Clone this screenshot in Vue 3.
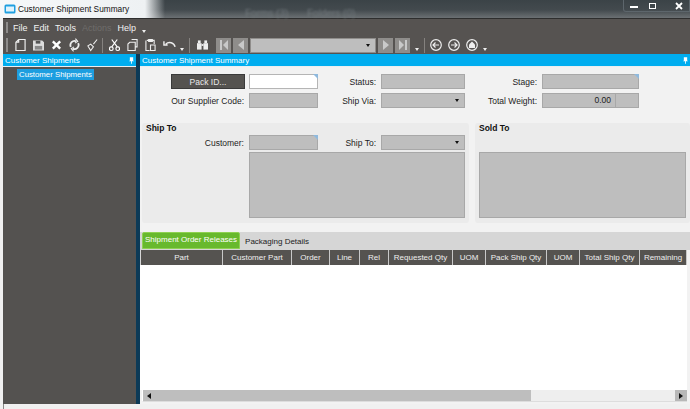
<template>
  <div class="window">
    <!-- Title bar -->
    <div class="titlebar">
      <svg class="app-icon" viewBox="0 0 12 10">
        <rect x="0.5" y="0.5" width="11" height="9" rx="1.5" fill="#1f9fe0" />
        <rect x="2" y="2.5" width="8" height="5" fill="#dff3fc" />
      </svg>
      <span class="title-text">Customer Shipment Summary</span>
      <span class="blur-text">Forms (3)</span>
      <span class="blur-text second">Folders (0)</span>
      <div class="win-buttons">
        <span class="win-btn"><i class="min"></i></span>
        <span class="win-btn"><i class="max"></i></span>
        <span class="win-btn close">
          <svg viewBox="0 0 8 8" width="8" height="8"><path d="M1 1l6 6M7 1L1 7" stroke="#fff" stroke-width="1.8" /></svg>
        </span>
      </div>
    </div>

    <div class="frame">
      <!-- Menu -->
      <div class="menubar">
        <span class="grip"></span>
        <span class="menu-item">File</span>
        <span class="menu-item">Edit</span>
        <span class="menu-item">Tools</span>
        <span class="menu-item disabled">Actions</span>
        <span class="menu-item">Help</span>
        <span class="drop-mark"></span>
      </div>

      <!-- Toolbar -->
      <div class="toolbar">
        <span class="grip tall"></span>
        <svg class="tool" viewBox="0 0 12 14" fill="none" stroke="#eee" stroke-width="1.3"><path d="M4 1h7v12H1V4zM4 1v3H1" /></svg>
        <svg class="tool" viewBox="0 0 12 14"><path d="M0 2h10l2 2v9H0z" fill="#ddd" /><rect x="3" y="2.5" width="5" height="3" fill="#555" /><rect x="2" y="8" width="8" height="4" fill="#888" /></svg>
        <svg class="tool" viewBox="0 0 12 14"><path d="M2 3l8 8M10 3l-8 8" stroke="#fff" stroke-width="2.6" /></svg>
        <svg class="tool" viewBox="0 0 12 14" fill="none" stroke="#eee" stroke-width="2"><path d="M2 9a4.500 4.500 0 0 1 6-6M10 5a4.500 4.500 0 0 1-6 6" /><path d="M7 0l2.500 3-3 2M5 14l-2.500-3 3-2" stroke-width="1.2" /></svg>
        <svg class="tool" viewBox="0 0 12 14" fill="none" stroke="#eee" stroke-width="1.2"><path d="M11 1L7 6M4 6l3 3-3 4-3-5z" /></svg>
        <span class="sep"></span>
        <svg class="tool" viewBox="0 0 12 14" fill="none" stroke="#fff" stroke-width="1.3"><path d="M3 1l6 8M9 1L3 9" /><circle cx="2.500" cy="11" r="2" /><circle cx="9.500" cy="11" r="2" /></svg>
        <svg class="tool" viewBox="0 0 12 14" fill="none" stroke="#eee" stroke-width="1.2"><path d="M5 1h6v8H9M3 4h6v9H1V6z" /></svg>
        <svg class="tool" viewBox="0 0 12 14" fill="none" stroke="#eee" stroke-width="1.2"><path d="M2 2h8v4M5 13H1V2M4 1h4v2H4zM6 7h5v6H6z" /></svg>
        <svg class="tool wide" viewBox="0 0 14 14" fill="none" stroke="#eee" stroke-width="1.5"><path d="M3 6a6 6 0 0 1 10 3M1 3v4h4" /></svg>
        <span class="drop-mark small"></span>
        <span class="sep narrow"></span>
        <svg class="tool binoc" viewBox="0 0 12 14" fill="#eee"><rect x="0" y="5" width="5" height="7" /><rect x="7" y="5" width="5" height="7" /><rect x="1" y="2" width="3" height="3" /><rect x="8" y="2" width="3" height="3" /><rect x="5" y="6" width="2" height="2" /></svg>
        <span class="nav-btn first">
          <svg viewBox="0 0 10 12" width="10" height="12" fill="#c9c9c9"><rect x="1" y="1" width="2" height="10" /><path d="M9 1v10L4 6z" /></svg>
        </span>
        <span class="nav-btn">
          <svg viewBox="0 0 10 12" width="10" height="12" fill="#c9c9c9"><path d="M8 1v10L2 6z" /></svg>
        </span>
        <span class="nav-combo"><span class="arrow"></span></span>
        <span class="nav-btn">
          <svg viewBox="0 0 10 12" width="10" height="12" fill="#c9c9c9"><path d="M2 1v10l6-5z" /></svg>
        </span>
        <span class="nav-btn">
          <svg viewBox="0 0 10 12" width="10" height="12" fill="#c9c9c9"><path d="M1 1v10l5-5z" /><rect x="7" y="1" width="2" height="10" /></svg>
        </span>
        <span class="drop-mark after-nav"></span>
        <span class="sep narrow"></span>
        <svg class="round first-round" viewBox="0 0 12 12" fill="none" stroke="#eee" stroke-width="1.2"><circle cx="6" cy="6" r="5.300" /><path d="M9 6H3.500M5.500 3.500L3 6l2.500 2.500" /></svg>
        <svg class="round" viewBox="0 0 12 12" fill="none" stroke="#eee" stroke-width="1.2"><circle cx="6" cy="6" r="5.300" /><path d="M3 6h5.500M6.500 3.500L9 6 6.500 8.500" /></svg>
        <svg class="round" viewBox="0 0 12 12"><circle cx="6" cy="6" r="5.300" fill="none" stroke="#eee" stroke-width="1.2" /><path d="M6 2.500L9 5.500V9H3V5.500z" fill="#eee" /></svg>
        <span class="drop-mark after-round"></span>
      </div>

      <div class="panes">
        <!-- Left tree -->
        <aside class="side">
          <div class="pane-head">
            <span>Customer Shipments</span>
            <svg class="pin" viewBox="0 0 6 8"><path d="M1 0h4v4l1 1H0l1-1zM2.500 5h1v3h-1z" fill="#fff" /></svg>
          </div>
          <div class="side-body">
            <span class="tree-node">Customer Shipments</span>
          </div>
        </aside>
        <div class="splitter"></div>

        <!-- Main -->
        <main class="main">
          <div class="pane-head">
            <span>Customer Shipment Summary</span>
            <svg class="pin" viewBox="0 0 6 8"><path d="M1 0h4v4l1 1H0l1-1zM2.500 5h1v3h-1z" fill="#fff" /></svg>
          </div>

          <div class="top-form">
            <button class="pack-btn">Pack ID...</button>
            <span class="field white flag"></span>
            <label>Status:</label>
            <span class="field"></span>
            <label>Stage:</label>
            <span class="field flag"></span>

            <label>Our Supplier Code:</label>
            <span class="field"></span>
            <label>Ship Via:</label>
            <span class="field select"><span class="arrow"></span></span>
            <label>Total Weight:</label>
            <span class="field weight"><span class="weight-val">0.00</span><span class="weight-unit"></span></span>
          </div>

          <div class="groups">
            <section class="group ship">
              <h4>Ship To</h4>
              <div class="ship-grid">
                <label>Customer:</label>
                <span class="field flag"></span>
                <label>Ship To:</label>
                <span class="field select"><span class="arrow"></span></span>
                <span class="field memo"></span>
              </div>
            </section>
            <section class="group sold">
              <h4>Sold To</h4>
              <span class="field memo"></span>
            </section>
          </div>

          <div class="tabs">
            <span class="tab active">Shipment Order Releases</span>
            <span class="tab">Packaging Details</span>
          </div>

          <div class="grid-head">
            <span
              v-for="col in columns"
              :key="col.name + col.width"
              class="col"
              :style="{ width: col.width + 'px' }"
            >{{ col.name }}</span>
          </div>
          <div class="grid-body"></div>

          <div class="hscroll">
            <span class="sb-btn left"><span class="tri-left"></span></span>
            <span class="sb-thumb"></span>
            <span class="sb-track"></span>
            <span class="sb-btn right"><span class="tri-right"></span></span>
          </div>
        </main>
      </div>
    </div>
    <div class="statusbar"></div>
  </div>
</template>

<script setup>
const columns = [
  { name: 'Part', width: 82 },
  { name: 'Customer Part', width: 69 },
  { name: 'Order', width: 38 },
  { name: 'Line', width: 30 },
  { name: 'Rel', width: 29 },
  { name: 'Requested Qty', width: 64 },
  { name: 'UOM', width: 33 },
  { name: 'Pack Ship Qty', width: 61 },
  { name: 'UOM', width: 33 },
  { name: 'Total Ship Qty', width: 60 },
  { name: 'Remaining', width: 47 }
]
</script>

<style>
html, body {
  margin: 0;
  background: #f0f0f0;
}
</style>

<style scoped>
.window {
  width: 690px;
  height: 409px;
  overflow: hidden;
  display: flex;
  flex-direction: column;
  font-family: "Liberation Sans", Arial, sans-serif;
  font-size: 8.5px;
  color: #1c1c1c;
  background: #f0f0f0;
}

/* Title bar */
.titlebar {
  height: 18px;
  flex-shrink: 0;
  display: flex;
  align-items: center;
  position: relative;
  background:
    linear-gradient(90deg, #f6f8f9 0, #eef1f3 145px, rgba(238, 241, 243, 0) 165px),
    linear-gradient(180deg, #3b4347 0, #434a4e 10px, #6b7073 100%);
}
.app-icon {
  width: 12px;
  height: 10px;
  margin-left: 4px;
}
.title-text {
  margin-left: 2px;
  font-size: 8.3px;
  color: #111;
}
.blur-text {
  position: absolute;
  left: 245px;
  top: 8px;
  font-size: 10px;
  color: #70777b;
  filter: blur(1px);
}
.blur-text.second {
  left: 307px;
}
.win-buttons {
  position: absolute;
  right: 0;
  top: 0;
  height: 12px;
  width: 67px;
  display: flex;
  border: 1px solid #5d666c;
  border-top: 0;
  border-radius: 0 0 0 3px;
  box-sizing: border-box;
}
.win-btn {
  width: 19px;
  display: flex;
  align-items: center;
  justify-content: center;
}
.win-btn.close {
  flex: 1;
  padding-left: 6px;
}
.min {
  width: 8px;
  height: 2px;
  background: #fff;
  margin-top: 3px;
}
.max {
  width: 5px;
  height: 4px;
  border: 1.5px solid #fff;
}

/* Frame */
.frame {
  flex: 1;
  min-height: 0;
  margin-left: 3px;
  display: flex;
  flex-direction: column;
  background: #565351;
  border-top: 1px solid #2e2e2e;
}
.menubar {
  height: 17px;
  display: flex;
  align-items: center;
  color: #f2f2f2;
  font-size: 9px;
}
.menubar .grip {
  height: 11px;
  margin: 0 5px 0 3px;
}
.grip {
  width: 2px;
  background: #8d8b8a;
}
.grip.tall {
  height: 14px;
  margin: 0 0 0 3px;
}
.menu-item {
  margin-right: 6px;
}
.menu-item.disabled {
  color: #6f6d6b;
}
.drop-mark {
  width: 0;
  height: 0;
  border: 2px solid transparent;
  border-top: 3px solid #eee;
  border-bottom: 0;
  align-self: flex-end;
  margin-bottom: 3px;
}
.drop-mark.small {
  margin-left: 4px;
}
.drop-mark.after-nav {
  margin-left: 5px;
}
.drop-mark.after-round {
  margin-left: 5px;
}

.toolbar {
  height: 18px;
  display: flex;
  align-items: center;
}
.tool {
  width: 11px;
  height: 14px;
  margin-left: 7px;
  flex-shrink: 0;
}
.tool.wide {
  width: 13px;
}
.sep {
  width: 1px;
  height: 15px;
  background: #85827f;
  margin-left: 4px;
  margin-right: -1px;
}
.sep.narrow {
  margin-left: 5px;
  margin-right: 0;
}
.nav-btn {
  width: 15px;
  height: 15px;
  margin-left: 2px;
  background: #8f8d8b;
  display: flex;
  align-items: center;
  justify-content: center;
  flex-shrink: 0;
}
.nav-btn.first {
  margin-left: 8px;
}
.nav-combo {
  width: 126px;
  height: 15px;
  margin-left: 2px;
  background: #bebebe;
  border: 1px solid #8f8d8b;
  box-sizing: border-box;
  position: relative;
}
.round {
  width: 12px;
  height: 12px;
  margin-left: 6px;
  flex-shrink: 0;
}
.round.first-round {
  margin-left: 5px;
}
.arrow {
  position: absolute;
  right: 5px;
  top: 5px;
  width: 0;
  height: 0;
  border: 2.5px solid transparent;
  border-top: 3px solid #111;
  border-bottom: 0;
}

/* Panes */
.panes {
  flex: 1;
  min-height: 0;
  display: flex;
}
.side {
  width: 133px;
  flex-shrink: 0;
  display: flex;
  flex-direction: column;
}
.splitter {
  width: 4px;
  flex-shrink: 0;
  background: #0c3a57;
}
.pane-head {
  height: 12px;
  flex-shrink: 0;
  display: flex;
  align-items: center;
  justify-content: space-between;
  padding: 0 2px;
  background: #00adef;
  color: #fff;
  border-bottom: 1px solid #e9eef1;
  font-size: 8px;
}
.pin {
  width: 5px;
  height: 7px;
}
.side-body {
  flex: 1;
  padding-top: 2px;
  padding-left: 14px;
  background: #545250;
}
.tree-node {
  display: inline-block;
  background: #1d9ee0;
  color: #fff;
  padding: 0 2px;
  line-height: 11px;
  font-size: 7.8px;
}

.main {
  flex: 1;
  min-width: 0;
  display: flex;
  flex-direction: column;
  background: #f2f2f2;
}

/* Form */
.top-form {
  display: grid;
  grid-template-columns: 109px 69px 63px 84px 77px 97px;
  grid-auto-rows: 15px;
  row-gap: 4px;
  padding-top: 7px;
  padding-bottom: 8px;
  height: 41px;
  align-items: center;
  flex-shrink: 0;
}
label {
  text-align: right;
  padding-right: 5px;
  white-space: nowrap;
}
.pack-btn {
  justify-self: end;
  width: 74px;
  height: 15px;
  margin-right: 4px;
  padding: 0;
  border: 1px solid #3a3a3a;
  background: #555350;
  color: #e8e8e8;
  font: inherit;
}
.field {
  display: block;
  position: relative;
  height: 15px;
  background: #bebebe;
  border: 1px solid #a8a8a8;
  box-sizing: border-box;
}
.field.white {
  background: #fff;
  border-color: #b5b5b5;
}
.flag::after {
  content: "";
  position: absolute;
  top: -1px;
  right: -1px;
  border-top: 5px solid #8fb9dd;
  border-left: 5px solid transparent;
}
.weight {
  display: flex;
}
.weight-val {
  flex: 1;
  text-align: right;
  padding-right: 4px;
  line-height: 13px;
  border-right: 1px solid #a8a8a8;
}
.weight-unit {
  width: 22px;
}

/* Groups */
.groups {
  display: flex;
  height: 100px;
  padding-left: 2px;
  gap: 6px;
  flex-shrink: 0;
}
.group {
  background: #ebebeb;
  border-radius: 3px;
  padding: 0 4px;
}
.group h4 {
  margin: 0;
  font-size: 8.5px;
  line-height: 11px;
  color: #111;
  font-weight: bold;
}
.ship {
  width: 328px;
  box-sizing: border-box;
}
.sold {
  flex: 1;
}
.ship-grid {
  display: grid;
  grid-template-columns: 107px 69px 63px 84px;
  grid-template-rows: 15px 66px;
  row-gap: 2px;
  margin-left: -4px;
  margin-top: 1px;
  align-items: center;
}
.memo {
  height: 66px;
  grid-column: 2 / 5;
}
.sold .memo {
  margin-top: 18px;
  width: 207px;
}

/* Tabs */
.tabs {
  margin-top: 9px;
  height: 17px;
  padding: 0 0 1px 2px;
  flex-shrink: 0;
  display: flex;
  align-items: flex-end;
  background: #d6d6d6;
  font-size: 8px;
}
.tab {
  line-height: 15px;
  padding: 0 8px 0 5px;
  color: #222;
}
.tab.active {
  background: #68b92d;
  border: 1px solid #8fd152;
  border-radius: 2px 2px 0 0;
  color: #fff;
  padding: 0 2px 1px;
  line-height: 14px;
}

/* Grid */
.grid-head {
  display: flex;
  height: 15px;
  flex-shrink: 0;
  padding-left: 1px;
  margin-right: 3px;
  overflow: hidden;
  background: #d6d6d6;
  font-size: 8px;
}
.col {
  box-sizing: border-box;
  flex-shrink: 0;
  background: #555350;
  border-right: 1px solid #c8c8c8;
  color: #eee;
  text-align: center;
  line-height: 15px;
  white-space: nowrap;
  overflow: hidden;
}
.grid-body {
  flex: 1;
  min-height: 0;
  margin-right: 3px;
  background: #fff;
}

/* Scrollbar */
.hscroll {
  height: 12px;
  flex-shrink: 0;
  display: flex;
  margin: 0 3px 2px 2px;
  background: #eee;
  border-left: 1px solid #fff;
  border-bottom: 1px solid #ddd;
  box-sizing: border-box;
}
.sb-btn {
  width: 11px;
  flex-shrink: 0;
  display: flex;
  align-items: center;
  justify-content: center;
  background: #bebebe;
}
.sb-btn.right {
  width: 12px;
  background: #b8b8b8;
}
.sb-thumb {
  width: 377px;
  background: #bebebe;
}
.sb-track {
  flex: 1;
}
.tri-left {
  border: 3px solid transparent;
  border-right: 4px solid #111;
  border-left: 0;
}
.tri-right {
  border: 3px solid transparent;
  border-left: 4px solid #111;
  border-right: 0;
}

.statusbar {
  height: 5px;
  flex-shrink: 0;
  background: #f0f0f0;
  margin-left: 3px;
  border-left: 1px solid #888;
}
</style>
